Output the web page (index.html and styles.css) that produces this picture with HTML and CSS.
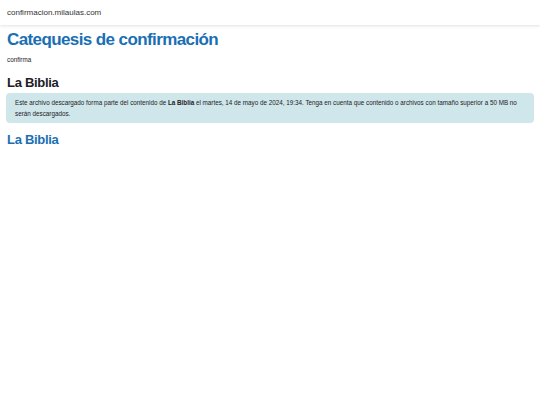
FILE: index.html
```html
<!DOCTYPE html>
<html lang="es">
<head>
<meta charset="utf-8">
<title>La Biblia</title>
<link rel="stylesheet" href="styles.css">
</head>
<body>
<header class="topbar">confirmacion.milaulas.com</header>
<main class="page">
  <h1 class="course">Catequesis de confirmación</h1>
  <div class="short">confirma</div>
  <h2 class="section">La Biblia</h2>
  <div class="alert">Este archivo descargado forma parte del contenido de <strong>La Biblia</strong> el martes, 14 de mayo de 2024, 19:34. Tenga en cuenta que contenido o archivos con tamaño superior a 50 MB no serán descargados.</div>
  <h2 class="title">La Biblia</h2>
</main>
</body>
</html>
```
FILE: styles.css
```css
html, body {
  margin: 0;
  padding: 0;
  background: #fff;
  font-family: "Liberation Sans", Arial, sans-serif;
  color: #1d2125;
}
.topbar {
  height: 25px;
  line-height: 25px;
  padding-left: 7px;
  font-size: 8px;
  color: #333;
  box-shadow: 0 1px 3px rgba(0,0,0,0.12);
  background: #fff;
}
.page {
  padding: 0 7px;
}
.course {
  margin: 5px 0 0;
  font-size: 17px;
  line-height: 20px;
  letter-spacing: -0.6px;
  color: #1a6fb4;
  font-weight: bold;
}
.short {
  margin-top: 5.5px;
  font-size: 6.3px;
  line-height: 8px;
  color: #1d2125;
}
.section {
  margin: 11px 0 0;
  font-size: 13px;
  line-height: 16px;
  letter-spacing: -0.3px;
  font-weight: bold;
}
.alert {
  margin: 2.7px -1px 0;
  padding: 4px 9px;
  height: 22px;
  background: #cfe7ea;
  border-radius: 4px;
  font-size: 6.3px;
  line-height: 11px;
  color: #1d2125;
}
.alert strong { font-weight: bold; }
.title {
  margin: 9px 0 0;
  font-size: 13px;
  line-height: 16px;
  letter-spacing: -0.3px;
  font-weight: bold;
  color: #1a6fb4;
}
```
